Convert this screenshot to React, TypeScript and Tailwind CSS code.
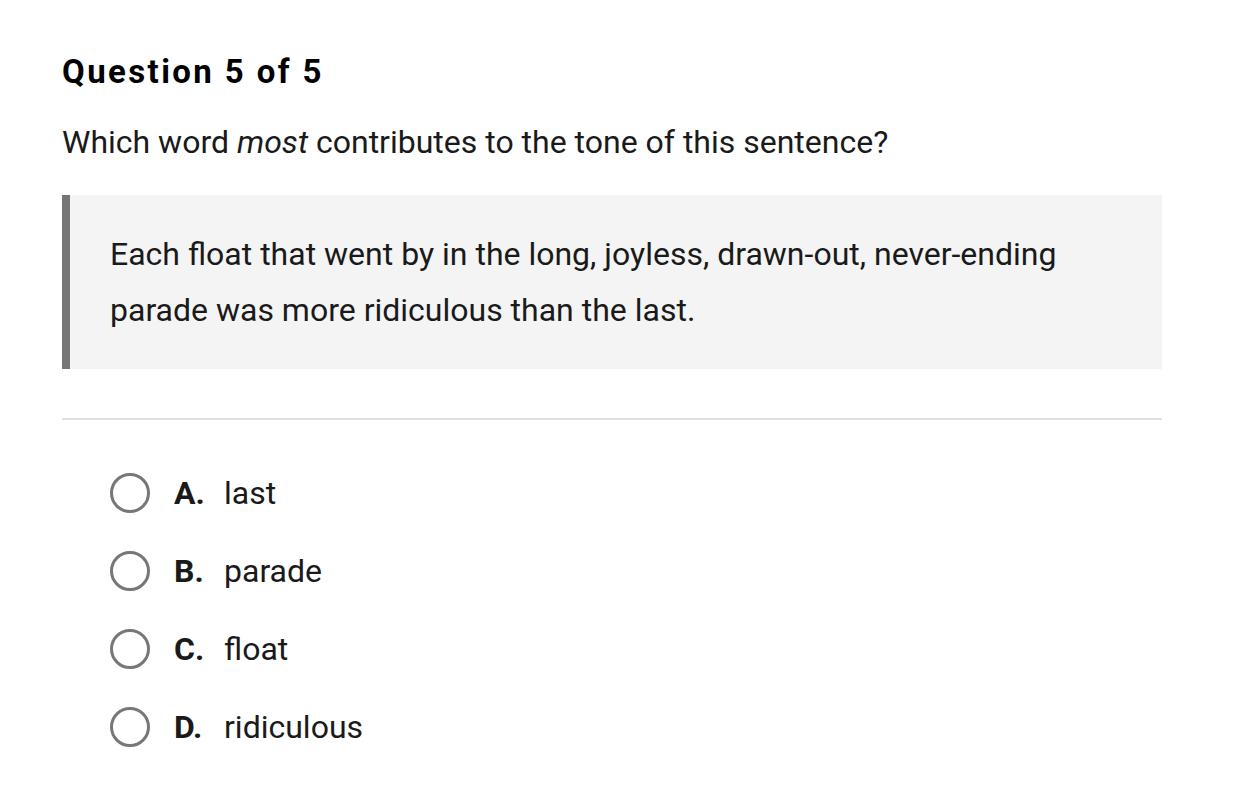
const options = [
  { letter: "A.", text: "last" },
  { letter: "B.", text: "parade" },
  { letter: "C.", text: "float" },
  { letter: "D.", text: "ridiculous" },
];

export default function App() {
  return (
    <div className="min-h-screen bg-white font-['Roboto',sans-serif] text-[#1a1a1a]">
      <div className="w-[1100px] pl-[62px] pt-[52px] box-content">
        <h1 className="text-[33px] font-bold leading-[40px] tracking-[2.4px] text-black">Question 5 of 5</h1>
        <p className="mt-[30px] text-[32px] leading-[40px]">
          Which word <em>most</em> contributes to the tone of this sentence?
        </p>

        <div className="mt-[33px] flex bg-[#f4f4f4]">
          <div className="w-[8px] shrink-0 bg-[#767676]" />
          <p className="py-[31px] pl-[40px] pr-[40px] text-[32px] leading-[56px]">
            Each float that went by in the long, joyless, drawn-out, never-ending
            parade was more ridiculous than the last.
          </p>
        </div>

        <div className="mt-[49px] h-[2px] bg-[#e0e0e0]" />

        <ul className="mt-[53px] flex flex-col gap-[38px] pl-[48px]">
          {options.map((o) => (
            <li key={o.letter} className="flex h-[40px] items-center">
              <span className="h-[40px] w-[40px] shrink-0 rounded-full border-[3px] border-[#777]" />
              <span className="ml-[24px] w-[50px] text-[32px] font-bold">{o.letter}</span>
              <span className="text-[32px]">{o.text}</span>
            </li>
          ))}
        </ul>
      </div>
    </div>
  );
}
